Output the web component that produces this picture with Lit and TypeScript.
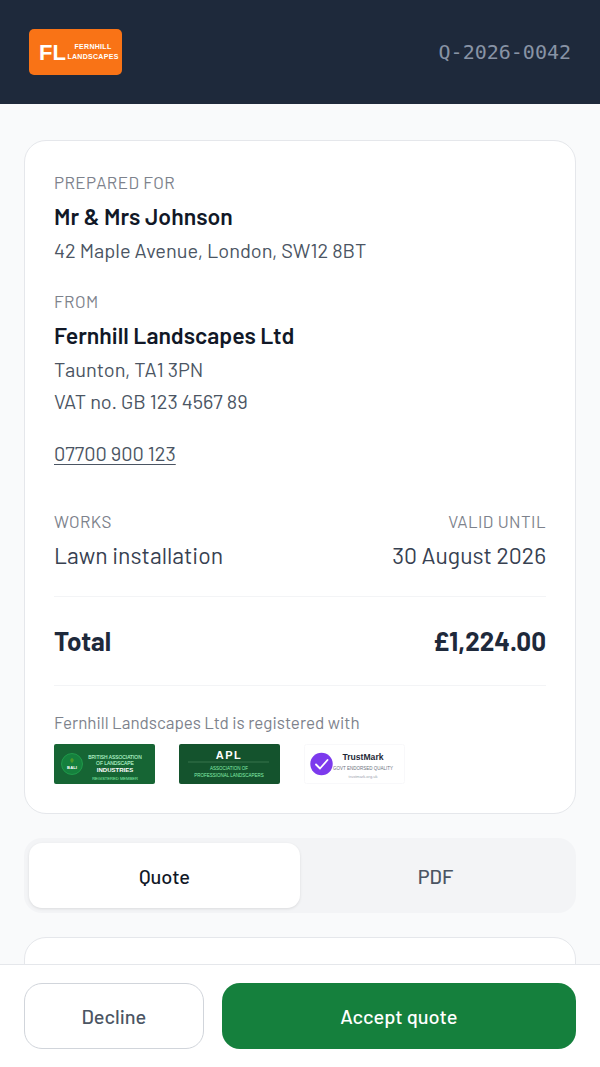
import { LitElement, html, css } from "lit";
import { customElement, state } from "lit/decorators.js";
import { classMap } from "lit/directives/class-map.js";

type View = "quote" | "pdf";

@customElement("company-logo")
class CompanyLogo extends LitElement {
  static styles = css`
    :host, svg { display: block; }
    text { font-family: "Liberation Sans", Arial, sans-serif; font-weight: 700; fill: #fff; }
  `;
  render() {
    return html`
      <svg width="93" height="46" viewBox="0 0 93 46" role="img" aria-label="Fernhill Landscapes">
        <rect width="93" height="46" rx="5" fill="#f97316" />
        <text x="10" y="31" font-size="22">FL</text>
        <text x="64" y="20" font-size="7" text-anchor="middle" letter-spacing="0.3">FERNHILL</text>
        <text x="64" y="30" font-size="7" text-anchor="middle" letter-spacing="0.3">LANDSCAPES</text>
      </svg>
    `;
  }
}

@customElement("member-badges")
class MemberBadges extends LitElement {
  static styles = css`
    :host { display: flex; flex-wrap: wrap; gap: 24px; }
    svg { display: block; }
    text { font-family: "Liberation Sans", Arial, sans-serif; text-anchor: middle; }
  `;
  render() {
    return html`
      <svg width="101" height="40" viewBox="0 0 101 40" role="img" aria-label="British Association of Landscape Industries">
        <rect width="101" height="40" rx="2" fill="#166534" />
        <circle cx="18" cy="20" r="10.5" fill="#15803d" stroke="#22a34f" stroke-width="0.8" />
        <path d="M18 14c2 1 2.5 3 0 5c-2.5-2-2-4 0-5z" fill="#4d9a2a" />
        <text x="18" y="25" font-size="4.2" font-weight="700" fill="#fff">BALI</text>
        <text x="61" y="14.5" font-size="4.9" fill="#bbf7d0" stroke="#bbf7d0" stroke-width="0.1">BRITISH ASSOCIATION</text>
        <text x="61" y="21" font-size="4.9" fill="#bbf7d0" stroke="#bbf7d0" stroke-width="0.1">OF LANDSCAPE</text>
        <text x="61" y="28" font-size="6" font-weight="700" fill="#fff">INDUSTRIES</text>
        <text x="61" y="35.5" font-size="4.1" fill="#86efac">REGISTERED MEMBER</text>
      </svg>
      <svg width="101" height="40" viewBox="0 0 101 40" role="img" aria-label="Association of Professional Landscapers">
        <rect width="101" height="40" rx="2" fill="#14532d" />
        <text x="50" y="14.5" font-size="11" font-weight="700" fill="#fff" letter-spacing="1.5">APL</text>
        <path d="M9 18h81" stroke="#4d8a62" stroke-width="0.6" />
        <text x="50" y="26" font-size="4.5" fill="#86efac">ASSOCIATION OF</text>
        <text x="50" y="32.5" font-size="4.5" fill="#86efac">PROFESSIONAL LANDSCAPERS</text>
      </svg>
      <svg width="101" height="40" viewBox="0 0 101 40" role="img" aria-label="TrustMark">
        <rect x="0.5" y="0.5" width="100" height="39" rx="2" fill="#fff" stroke="#f8f8fa" />
        <circle cx="17.5" cy="20" r="11.2" fill="#7c3aed" />
        <path d="M12 20.5l4 4l7.5-8.5" fill="none" stroke="#fff" stroke-width="1.8" stroke-linecap="round" stroke-linejoin="round" />
        <text x="59" y="16" font-size="8.6" font-weight="700" fill="#1f2937">TrustMark</text>
        <text x="59" y="25.5" font-size="4.5" fill="#6b7280">GOVT ENDORSED QUALITY</text>
        <text x="59" y="33.5" font-size="4" fill="#9ca3af">trustmark.org.uk</text>
      </svg>
    `;
  }
}

@customElement("app-root")
class AppRoot extends LitElement {
  @state() private view: View = "quote";

  static styles = css`
    :host {
      display: flex;
      flex-direction: column;
      height: 100vh;
      background: #f9fafb;
      color: #4b5563;
      font-family: Barlow, Roboto, sans-serif;
      font-size: 20px;
      line-height: 32px;
    }
    * { box-sizing: border-box; }
    p, h1, h2, dl, dd { margin: 0; }
    header {
      display: flex;
      flex: none;
      align-items: center;
      justify-content: space-between;
      padding: 29px;
      background: #1e293b;
    }
    .reference {
      color: #8893a5;
      font-family: "DejaVu Sans Mono", monospace;
    }
    main {
      display: flex;
      flex: 1;
      flex-direction: column;
      gap: 24px;
      min-height: 0;
      padding: 36px 24px 0;
      overflow-y: auto;
      scrollbar-width: none;
    }
    .card {
      flex: none;
      padding: 29px;
      border: 1px solid #e5e7eb;
      border-radius: 22px;
      background: #fff;
    }
    .lines { min-height: 240px; }
    .label {
      margin-bottom: 4px;
      color: #7d828c;
      font-size: 17px;
      letter-spacing: 0.025em;
      line-height: 24px;
      text-transform: uppercase;
    }
    .name {
      color: #111827;
      font-size: 23px;
      font-weight: 600;
      line-height: 36px;
    }
    .from { margin-top: 23px; }
    .phone {
      display: block;
      width: max-content;
      margin: 20px 0 40px;
      color: #4b5563;
      text-decoration-thickness: 1px;
      text-underline-offset: 3px;
    }
    .summary {
      display: flex;
      justify-content: space-between;
      padding-bottom: 23px;
      color: #374151;
      font-size: 23px;
      line-height: 36px;
    }
    .end { text-align: right; }
    .total {
      display: flex;
      justify-content: space-between;
      padding: 24px 0;
      border: solid #f3f4f6;
      border-width: 1px 0;
      color: #1e293b;
      font-size: 26px;
      font-weight: 700;
      line-height: 40px;
    }
    .registered {
      padding: 24px 0 10px;
      color: #7d828c;
      font-size: 17px;
      line-height: 24px;
    }
    button {
      padding: 0;
      border: 0;
      font: inherit;
      font-weight: 500;
      cursor: pointer;
    }
    .tabs {
      display: grid;
      flex: none;
      grid-template-columns: 1fr 1fr;
      padding: 5px;
      border-radius: 18px;
      background: #f3f4f6;
    }
    .tab {
      height: 65px;
      border-radius: 13px;
      background: none;
      color: #4b5563;
    }
    .active {
      background: #fff;
      color: #111827;
      box-shadow: 0 1px 3px #0000001a;
    }
    footer {
      display: grid;
      flex: none;
      grid-template-columns: 180fr 355fr;
      gap: 18px;
      padding: 18px 24px;
      border-top: 1px solid #e5e7eb;
      background: #fff;
    }
    .action {
      height: 66px;
      border-radius: 18px;
      background: #15803d;
      color: #fff;
    }
    .decline {
      border: 1px solid #d1d5db;
      background: #fff;
      color: #4b5563;
    }
  `;

  private tab(view: View, text: string) {
    const selected = this.view === view;
    return html`<button
      class=${classMap({ tab: true, active: selected })}
      role="tab"
      aria-selected=${selected ? "true" : "false"}
      @click=${() => { this.view = view; }}
    >${text}</button>`;
  }

  render() {
    return html`
      <header>
        <company-logo></company-logo>
        <span class="reference">Q-2026-0042</span>
      </header>
      <main>
        <section class="card">
          <p class="label">Prepared for</p>
          <h1 class="name">Mr &amp; Mrs Johnson</h1>
          <p>42 Maple Avenue, London, SW12 8BT</p>
          <p class="label from">From</p>
          <h2 class="name">Fernhill Landscapes Ltd</h2>
          <p>Taunton, TA1 3PN</p>
          <p>VAT no. GB 123 4567 89</p>
          <a class="phone" href="tel:07700900123">07700 900 123</a>
          <dl class="summary">
            <div><dt class="label">Works</dt><dd>Lawn installation</dd></div>
            <div class="end"><dt class="label">Valid until</dt><dd>30 August 2026</dd></div>
          </dl>
          <div class="total"><span>Total</span><span>£1,224.00</span></div>
          <p class="registered">Fernhill Landscapes Ltd is registered with</p>
          <member-badges></member-badges>
        </section>
        <div class="tabs" role="tablist">
          ${this.tab("quote", "Quote")}${this.tab("pdf", "PDF")}
        </div>
        <section class="card lines"></section>
      </main>
      <footer>
        <button class="action decline">Decline</button>
        <button class="action">Accept quote</button>
      </footer>
    `;
  }
}
